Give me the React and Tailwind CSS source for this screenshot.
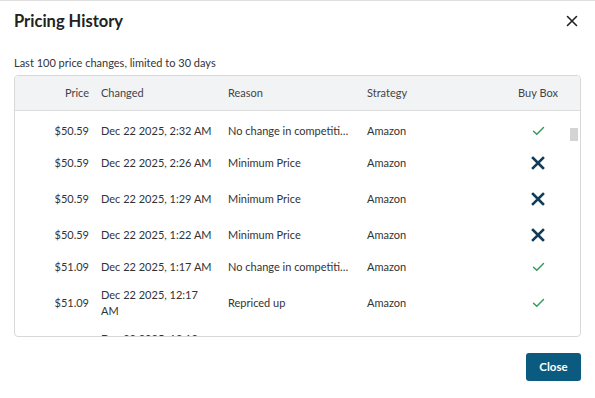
import React from "react";

const rows = [
  { price: "$50.59", changed: "Dec 22 2025, 2:32 AM", reason: "No change in competition status", strategy: "Amazon", buyBox: true },
  { price: "$50.59", changed: "Dec 22 2025, 2:26 AM", reason: "Minimum Price", strategy: "Amazon", buyBox: false },
  { price: "$50.59", changed: "Dec 22 2025, 1:29 AM", reason: "Minimum Price", strategy: "Amazon", buyBox: false },
  { price: "$50.59", changed: "Dec 22 2025, 1:22 AM", reason: "Minimum Price", strategy: "Amazon", buyBox: false },
  { price: "$51.09", changed: "Dec 22 2025, 1:17 AM", reason: "No change in competition status", strategy: "Amazon", buyBox: true },
  { price: "$51.09", changed: "Dec 22 2025, 12:17 AM", reason: "Repriced up", strategy: "Amazon", buyBox: true },
  { price: "$51.09", changed: "Dec 22 2025, 12:12 AM", reason: "Repriced up", strategy: "Amazon", buyBox: true },
];

const Check = () => (
  <svg width="13" height="10" viewBox="0 0 13 10" fill="none">
    <path d="M1.5 5.2 L4.8 8.3 L11.5 1.5" stroke="#2f9a5c" strokeWidth="1.4" strokeLinecap="round" strokeLinejoin="round" />
  </svg>
);

const Cross = () => (
  <svg width="14" height="14" viewBox="0 0 14 14" fill="none">
    <path d="M2 2 L12 12 M12 2 L2 12" stroke="#123d5a" strokeWidth="2.6" strokeLinecap="square" />
  </svg>
);

export default function App() {
  return (
    <div
      className="w-[595px] h-[398px] bg-white border-t border-[#dedede] text-[#333]"
      style={{ fontFamily: "Lato, 'Open Sans', sans-serif" }}
    >
      {/* Header */}
      <div className="flex items-center justify-between pl-[14px] pr-[17px] pt-[9px]">
        <h2 className="text-[16.5px] font-bold text-[#222] leading-[22px]">Pricing History</h2>
        <button className="text-[#222]">
          <svg width="12" height="12" viewBox="0 0 12 12" fill="none">
            <path d="M1.5 1.5 L10.5 10.5 M10.5 1.5 L1.5 10.5" stroke="#222" strokeWidth="1.6" strokeLinecap="round" />
          </svg>
        </button>
      </div>

      <div className="px-[14px] mt-[24px]">
        <p className="text-[11px] leading-[14px] text-[#333] mb-[5px]">Last 100 price changes, limited to 30 days</p>

        {/* Table */}
        <div className="border border-[#d8d8d8] rounded-[4px] overflow-hidden text-[11px]">
          <div className="flex items-center h-[35px] bg-[#f2f3f5] border-b border-[#dcdcdc] text-[#444]">
            <div className="w-[80px] pr-[6px] text-right">Price</div>
            <div className="w-[127px] pl-[6px]">Changed</div>
            <div className="w-[139px] pl-[6px]">Reason</div>
            <div className="w-[144px] pl-[6px]">Strategy</div>
            <div className="w-[66px] text-center">Buy Box</div>
          </div>

          <div className="relative h-[225px] overflow-hidden pt-[6px]">
            {rows.map((r, i) => (
              <div key={i} className="flex items-center py-[6px] leading-[16px]">
                <div className="w-[80px] pr-[6px] text-right">{r.price}</div>
                <div className="w-[127px] pl-[6px] pr-[6px]">{r.changed}</div>
                <div className="w-[139px] pl-[6px] pr-[8px] truncate">{r.reason}</div>
                <div className="w-[144px] pl-[6px]">{r.strategy}</div>
                <div className="w-[66px] flex justify-center">
                  {r.buyBox ? (
                    <div className="h-[16px] flex items-center"><Check /></div>
                  ) : (
                    <div className="h-[24px] flex items-center"><Cross /></div>
                  )}
                </div>
              </div>
            ))}
            <div className="absolute right-[2px] top-[17px] w-[8px] h-[13px] bg-[#d4d4d4]" />
          </div>
        </div>

        <div className="flex justify-end mt-[16px]">
          <button className="h-[28px] w-[55px] rounded-[3px] bg-[#0b5a80] text-white text-[11.5px] font-bold">
            Close
          </button>
        </div>
      </div>
    </div>
  );
}
